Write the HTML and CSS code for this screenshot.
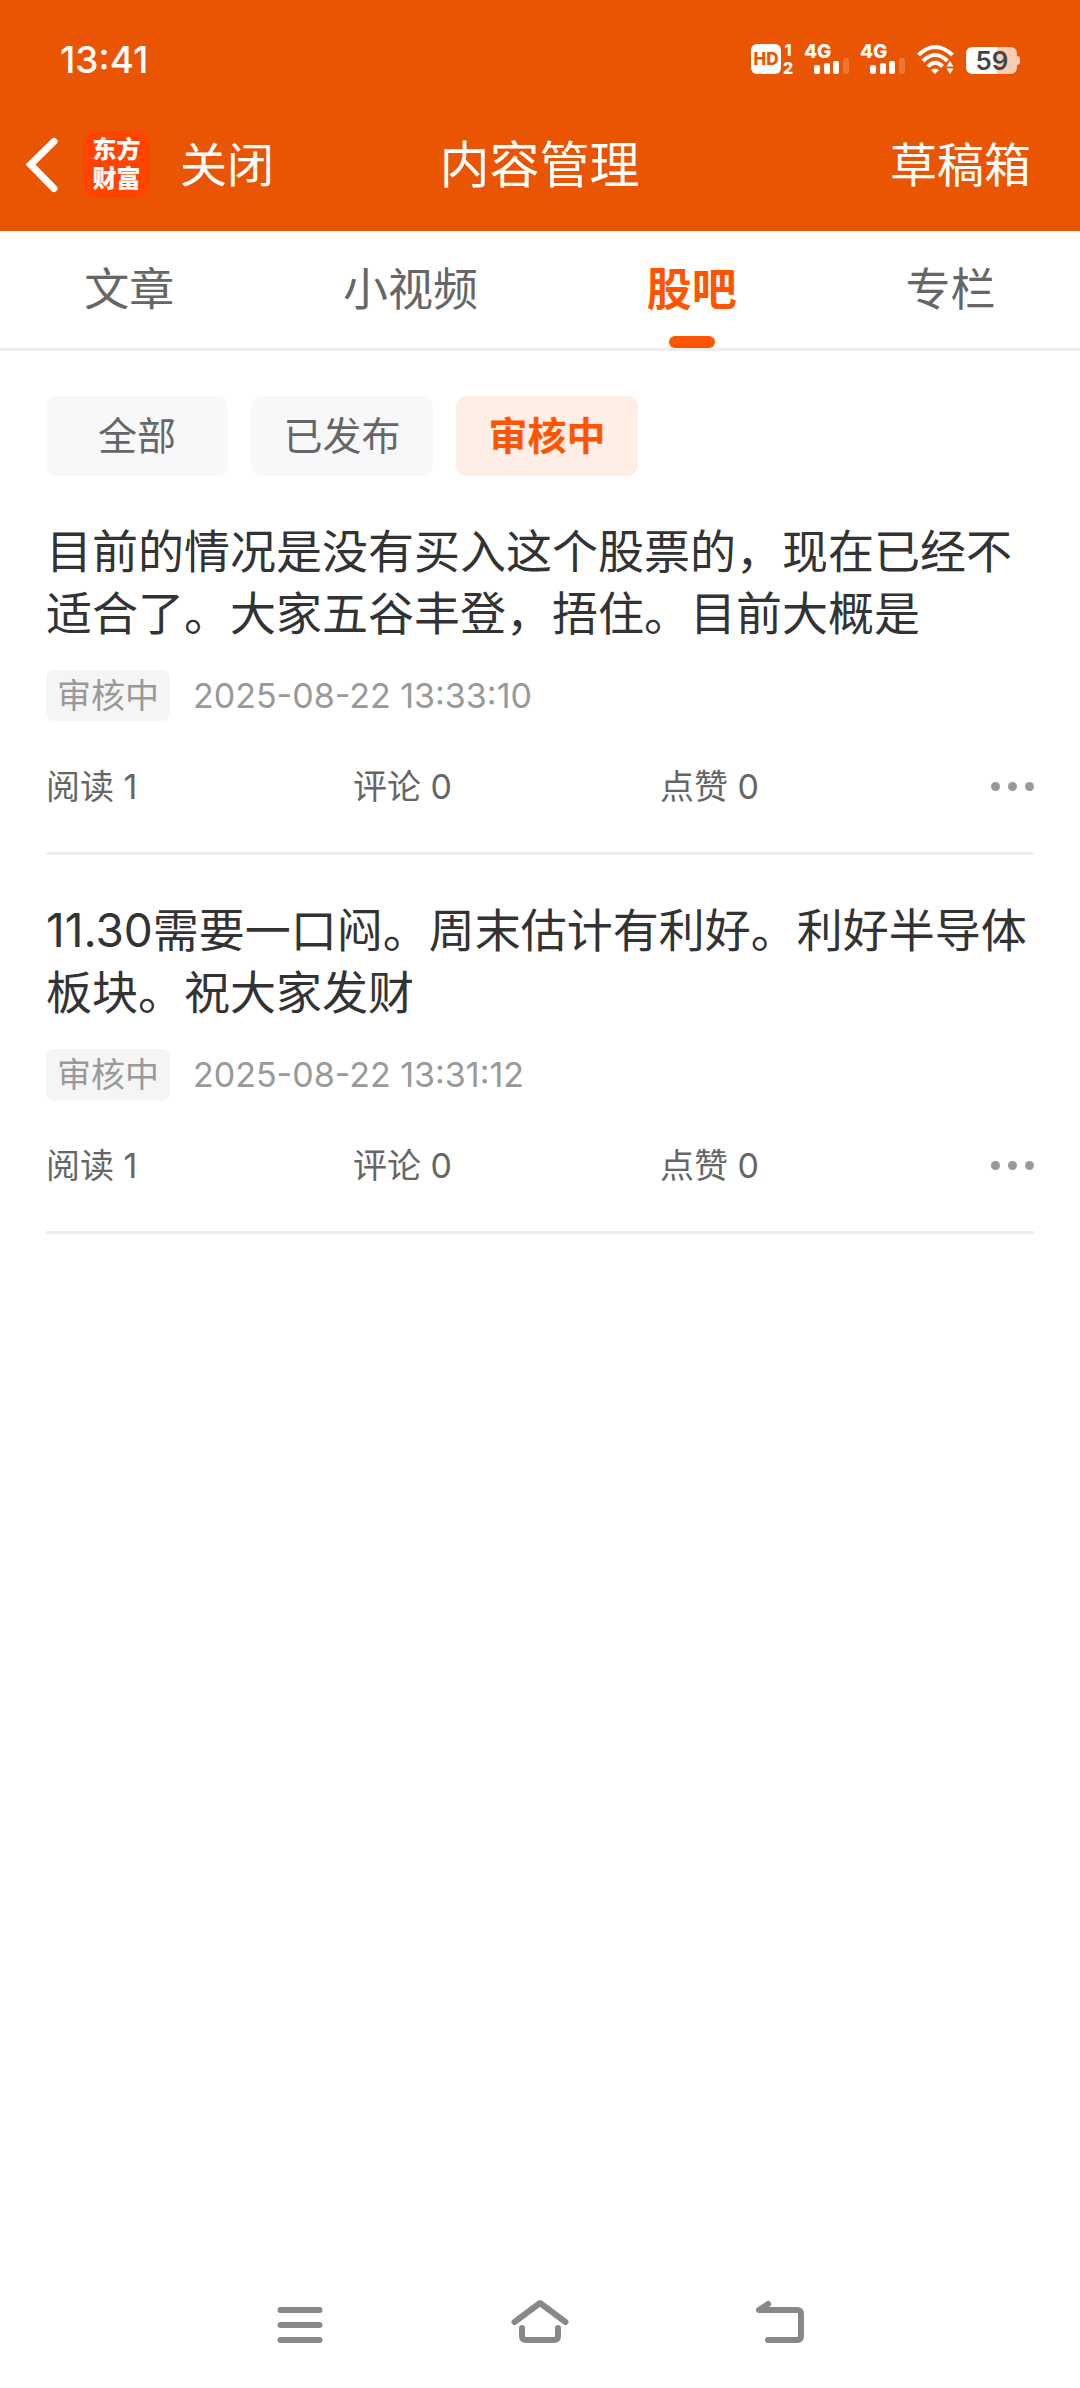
FILE: index.html
```html
<!DOCTYPE html>
<html lang="zh-CN">
<head>
    <meta charset="UTF-8">
    <meta name="viewport" content="width=device-width, initial-scale=1.0">
    <title>内容管理</title>
    <link rel="stylesheet" href="styles.css">
</head>
<body>

    <header class="header">
        <div class="status-bar">
            <span class="time">13:41</span>
            <div class="status-icons">
                <svg width="42" height="30" viewBox="0 0 42 30">
                    <rect width="30" height="30" rx="6" fill="#fff"/>
                    <text class="hd" x="15" y="21" text-anchor="middle">HD</text>
                    <text class="sim" x="37" y="12" text-anchor="middle">1</text>
                    <text class="sim" x="37" y="30" text-anchor="middle">2</text>
                </svg>
                <svg width="44" height="30" viewBox="0 0 44 30" fill="#fff">
                    <text class="net" x="-1" y="14">4G</text>
                    <rect x="9" y="21" width="6" height="9" rx="2"/>
                    <rect x="19" y="19" width="6" height="11" rx="2"/>
                    <rect x="28" y="17" width="6" height="13" rx="2"/>
                    <rect x="38" y="14" width="6" height="16" rx="2" opacity="0.2"/>
                </svg>
                <svg width="44" height="30" viewBox="0 0 44 30" fill="#fff">
                    <text class="net" x="-1" y="14">4G</text>
                    <rect x="9" y="21" width="6" height="9" rx="2"/>
                    <rect x="19" y="19" width="6" height="11" rx="2"/>
                    <rect x="28" y="17" width="6" height="13" rx="2"/>
                    <rect x="38" y="14" width="6" height="16" rx="2" opacity="0.2"/>
                </svg>
                <svg width="37" height="30" viewBox="0 0 37 30" fill="none" stroke="#fff" stroke-width="4">
                    <path d="M1.500 11 Q18 -5 35.500 11"/>
                    <path d="M6 17 Q18 5 30.500 17"/>
                    <path d="M11 22.500 Q18 15 25.500 22.500"/>
                    <path d="M14 26 Q18 23 22 26 L18 30 Z" fill="#fff" stroke="none"/>
                    <path d="M29.500 22.500 L33 17 L36.500 22.500 Z M29.500 24.500 L33 30 L36.500 24.500 Z" fill="#fff" stroke="none"/>
                </svg>
                <svg width="54" height="27" viewBox="0 0 54 27">
                    <path d="M31 0 H44 Q51 0 51 7 V9 Q54 9 54 12 V15 Q54 18 51 18 V20 Q51 27 44 27 H31 Z" fill="#fff" opacity="0.7"/>
                    <path d="M31 0 H7 Q0 0 0 7 V20 Q0 27 7 27 H31 Z" fill="#fff"/>
                    <text class="battery" x="26" y="23" text-anchor="middle">59</text>
                </svg>
            </div>
        </div>

        <div class="title-bar">
            <div class="left">
                <button class="back" aria-label="返回">
                    <svg width="33" height="56" viewBox="0 0 33 56" fill="none" stroke="#fff" stroke-width="7" stroke-linecap="round">
                        <path d="M28 4.500 L4.500 27.500 L28 51.500"/>
                    </svg>
                </button>
                <span class="logo">东方<br>财富</span>
                <button class="close">关闭</button>
            </div>
            <h1>内容管理</h1>
            <a class="drafts" href="#">草稿箱</a>
        </div>
    </header>

    <nav class="tabs">
        <a href="#">文章</a>
        <a href="#">小视频</a>
        <a href="#" class="active">股吧</a>
        <a href="#">专栏</a>
    </nav>

    <main>
        <div class="filters">
            <button>全部</button>
            <button>已发布</button>
            <button class="active">审核中</button>
        </div>

        <article class="post">
            <h2>目前的情况是没有买入这个股票的，现在已经不适合了。大家五谷丰登，捂住。目前大概是</h2>
            <div class="meta">
                <span class="tag">审核中</span>
                <time>2025-08-22 13:33:10</time>
            </div>
            <div class="stats">
                <span>阅读 1</span>
                <span>评论 0</span>
                <span>点赞 0</span>
                <button class="more" aria-label="更多">
                    <svg width="43" height="9" viewBox="0 0 43 9" fill="#999">
                        <circle cx="4.500" cy="4.500" r="4.500"/>
                        <circle cx="21.500" cy="4.500" r="4.500"/>
                        <circle cx="38.500" cy="4.500" r="4.500"/>
                    </svg>
                </button>
            </div>
        </article>

        <article class="post">
            <h2>11.30需要一口闷。周末估计有利好。利好半导体板块。祝大家发财</h2>
            <div class="meta">
                <span class="tag">审核中</span>
                <time>2025-08-22 13:31:12</time>
            </div>
            <div class="stats">
                <span>阅读 1</span>
                <span>评论 0</span>
                <span>点赞 0</span>
                <button class="more" aria-label="更多">
                    <svg width="43" height="9" viewBox="0 0 43 9" fill="#999">
                        <circle cx="4.500" cy="4.500" r="4.500"/>
                        <circle cx="21.500" cy="4.500" r="4.500"/>
                        <circle cx="38.500" cy="4.500" r="4.500"/>
                    </svg>
                </button>
            </div>
        </article>
    </main>

    <footer class="system-nav">
        <button aria-label="菜单">
            <svg width="60" height="50" viewBox="0 0 60 50" fill="none" stroke="#888" stroke-width="6" stroke-linecap="round">
                <path d="M10.500 10 H49.500 M10.500 25 H49.500 M10.500 40 H49.500"/>
            </svg>
        </button>
        <button aria-label="主页">
            <svg width="60" height="50" viewBox="0 0 60 50" fill="none" stroke="#888" stroke-width="6" stroke-linecap="round" stroke-linejoin="round">
                <path d="M4.500 22 L30 3 L55.500 22"/>
                <path d="M12 28 V36 Q12 40 16 40 H44 Q48 40 48 36 V28"/>
            </svg>
        </button>
        <button aria-label="后退">
            <svg width="60" height="50" viewBox="0 0 60 50" fill="none" stroke="#888" stroke-width="6" stroke-linecap="round" stroke-linejoin="round">
                <path d="M18 4 L9 10 H47 Q51 10 51 14 V36 Q51 40 47 40 H18"/>
            </svg>
        </button>
    </footer>

</body>
</html>
```
FILE: styles.css
```css
* {
    box-sizing: border-box;
}
body {
    margin: 0;
    min-height: 100vh;
    display: flex;
    flex-direction: column;
    background: #fff;
    color: #333;
    font-family: Inter, "Noto Sans CJK SC", sans-serif;
}
button {
    border: none;
    padding: 0;
    background: none;
    color: inherit;
    font: inherit;
    cursor: pointer;
}
a {
    color: inherit;
    text-decoration: none;
}
svg {
    display: block;
    overflow: visible;
}
h1, h2 {
    margin: 0;
    font-weight: normal;
}

/* header */
.header {
    background: #ea5504;
    color: #fff;
}
.status-bar {
    display: flex;
    align-items: center;
    justify-content: space-between;
    height: 98px;
    padding: 20px 60px 0;
}
.time {
    font-size: 37px;
    font-weight: 500;
}
.status-icons {
    display: flex;
    align-items: flex-end;
    gap: 12px;
}
.hd {
    font-size: 17px;
    font-weight: 800;
    fill: #ea5504;
}
.sim {
    font-size: 16px;
    font-weight: 800;
    fill: #fff;
}
.net {
    font-size: 19px;
    font-weight: 800;
}
.battery {
    font-size: 26px;
    font-weight: 600;
    fill: #444;
}
.title-bar {
    display: grid;
    grid-template-columns: 1fr auto 1fr;
    align-items: center;
    height: 133px;
    padding: 0 49px 0 26px;
    line-height: 48px;
}
.left {
    display: flex;
    align-items: center;
}
.logo {
    width: 67px;
    height: 67px;
    margin: 0 30px 0 24px;
    padding-top: 4px;
    border-radius: 14px;
    background: #ff4400;
    font-size: 24px;
    font-weight: 900;
    line-height: 29px;
    text-align: center;
}
.close {
    font-size: 47px;
}
.title-bar h1 {
    font-size: 50px;
    padding-left: 22px;
}
.drafts {
    justify-self: end;
    font-size: 47px;
}

/* tabs */
.tabs {
    display: flex;
    justify-content: space-around;
    height: 120px;
    border-bottom: 3px solid #eee;
    color: #666;
    font-size: 45px;
    line-height: 117px;
}
.tabs a {
    position: relative;
}
.tabs .active {
    color: #ff5500;
    font-weight: bold;
}
.tabs .active::after {
    content: "";
    position: absolute;
    bottom: 0;
    left: 50%;
    width: 46px;
    height: 12px;
    margin-left: -23px;
    border-radius: 6px;
    background: #ff5500;
}

/* posts */
main {
    flex: 1;
    padding: 45px 46px;
}
.filters {
    display: flex;
    gap: 23px;
}
.filters button {
    width: 182px;
    height: 80px;
    border-radius: 11px;
    background: #f8f8fa;
    color: #666;
    font-size: 39px;
    line-height: 40px;
}
.filters .active {
    background: #ffeee6;
    color: #ff5500;
    font-weight: bold;
}
.post {
    padding: 44px 0 40px;
    border-bottom: 3px solid #eee;
}
.post h2 {
    font-size: 46px;
    line-height: 62px;
}
.meta {
    display: flex;
    align-items: center;
    gap: 23px;
    margin: 26px 0 40px;
    color: #999;
    font-size: 34px;
    line-height: 51px;
}
.tag {
    padding: 0 11px;
    border-radius: 8px;
    background: #f5f5f5;
}
.stats {
    display: grid;
    grid-template-columns: 1fr 1fr 1fr auto;
    align-items: center;
    color: #666;
    font-size: 34px;
    line-height: 51px;
}
.more {
    padding: 12px 0 12px 24px;
}

/* bottom buttons */
.system-nav {
    display: flex;
    justify-content: center;
    gap: 120px;
    height: 126px;
}
.system-nav button {
    display: flex;
    align-items: center;
    justify-content: center;
    width: 120px;
}
```
